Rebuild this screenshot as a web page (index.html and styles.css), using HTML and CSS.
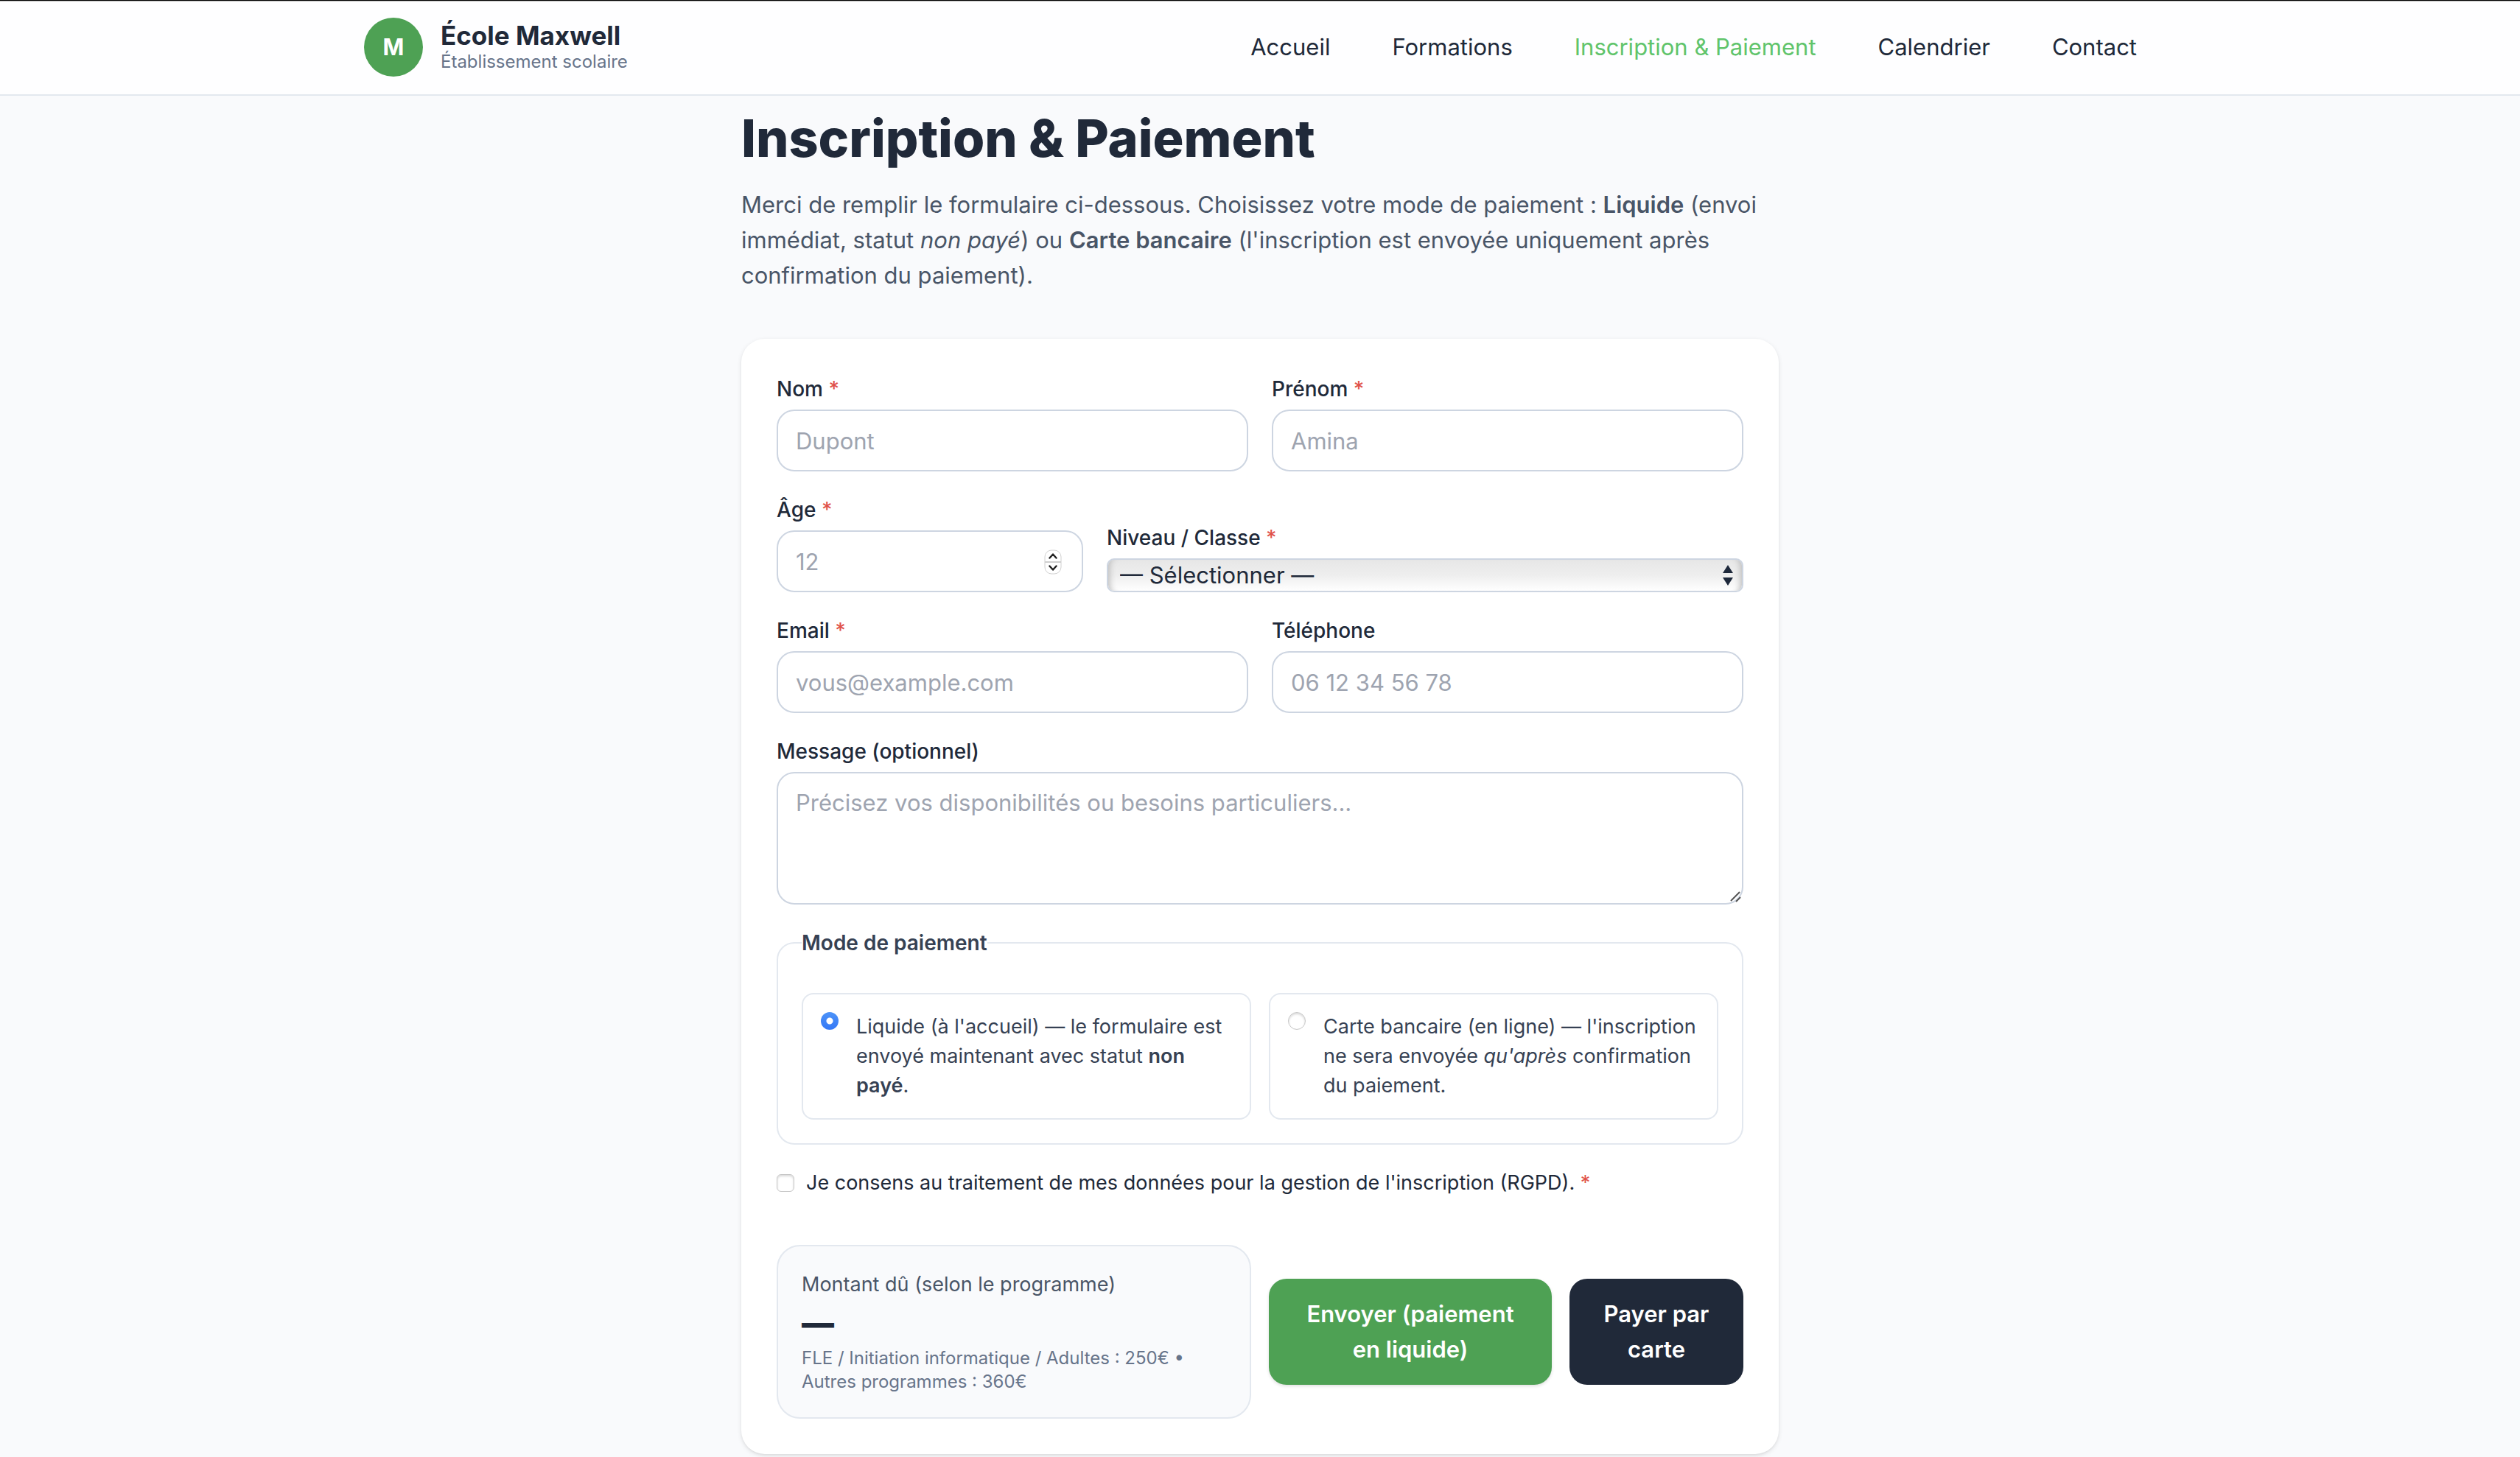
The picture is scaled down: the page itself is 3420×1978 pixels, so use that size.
FILE: index.html
```html
<!DOCTYPE html>
<html lang="fr">
<head>
  <meta charset="utf-8">
  <meta name="viewport" content="width=device-width, initial-scale=1">
  <title>Inscription &amp; Paiement – École Maxwell</title>
  <link rel="stylesheet" href="styles.css">
</head>
<body>
  <header class="site-header">
    <div class="header-inner">
      <a class="brand" href="#">
        <span class="brand-logo">M</span>
        <span class="brand-text">
          <span class="brand-name">École Maxwell</span>
          <span class="brand-tagline">Établissement scolaire</span>
        </span>
      </a>
      <nav class="site-nav">
        <a href="#">Accueil</a>
        <a href="#">Formations</a>
        <a href="#" class="active" aria-current="page">Inscription &amp; Paiement</a>
        <a href="#">Calendrier</a>
        <a href="#">Contact</a>
      </nav>
    </div>
  </header>

  <main class="page">
    <h1>Inscription &amp; Paiement</h1>
    <p class="intro">Merci de remplir le formulaire ci-dessous. Choisissez votre mode de paiement : <strong>Liquide</strong> (envoi immédiat, statut <em>non payé</em>) ou <strong>Carte bancaire</strong> (l'inscription est envoyée uniquement après confirmation du paiement).</p>

    <form class="card">
      <div class="row row-2">
        <div class="field">
          <label for="nom">Nom <span class="req">*</span></label>
          <input class="control" id="nom" type="text" placeholder="Dupont">
        </div>
        <div class="field">
          <label for="prenom">Prénom <span class="req">*</span></label>
          <input class="control" id="prenom" type="text" placeholder="Amina">
        </div>
      </div>

      <div class="row row-3">
        <div class="field">
          <label for="age">Âge <span class="req">*</span></label>
          <div class="control-wrap">
            <input class="control" id="age" type="number" placeholder="12">
            <svg class="stepper" viewBox="0 0 24 34" aria-hidden="true">
              <rect x="1" y="1" width="22" height="32" rx="9" fill="#fff" stroke="#d0d0d0" stroke-width="1"/>
              <path d="M1 17h22" stroke="#cfcfcf" stroke-width="2"/>
              <path d="M7.500 11.500l4.500-5 4.500 5M7.500 22.500l4.500 5 4.500-5" fill="none" stroke="#222" stroke-width="2.400" stroke-linecap="round" stroke-linejoin="round"/>
            </svg>
          </div>
        </div>
        <div class="field span-2">
          <label for="niveau">Niveau / Classe <span class="req">*</span></label>
          <div class="control-wrap">
            <select class="select" id="niveau"><option>— Sélectionner —</option></select>
            <svg class="arrows" viewBox="0 0 14 28" aria-hidden="true">
              <path d="M7 0l7 11H0zM7 28L0 17h14z" fill="#1e293b"/>
            </svg>
          </div>
        </div>
      </div>

      <div class="row row-2">
        <div class="field">
          <label for="email">Email <span class="req">*</span></label>
          <input class="control" id="email" type="email" placeholder="vous@example.com">
        </div>
        <div class="field">
          <label for="tel">Téléphone</label>
          <input class="control" id="tel" type="tel" placeholder="06 12 34 56 78">
        </div>
      </div>

      <div class="field">
        <label for="message">Message (optionnel)</label>
        <div class="control-wrap">
          <textarea class="control" id="message" rows="3" placeholder="Précisez vos disponibilités ou besoins particuliers..."></textarea>
          <svg class="grip" viewBox="0 0 16 16" aria-hidden="true">
            <path d="M1 13L13 1M8 14l6-6" fill="none" stroke="#555" stroke-width="2"/>
          </svg>
        </div>
      </div>

      <fieldset class="payment">
        <legend>Mode de paiement</legend>
        <div class="options">
          <label class="option">
            <input class="radio" type="radio" name="paiement" checked>
            <span>Liquide (à l'accueil) — le formulaire est envoyé maintenant avec statut <strong>non payé</strong>.</span>
          </label>
          <label class="option">
            <input class="radio" type="radio" name="paiement">
            <span>Carte bancaire (en ligne) — l'inscription ne sera envoyée <em>qu'après</em> confirmation du paiement.</span>
          </label>
        </div>
      </fieldset>

      <label class="consent">
        <input class="checkbox" type="checkbox">
        <span>Je consens au traitement de mes données pour la gestion de l'inscription (RGPD). <span class="req">*</span></span>
      </label>

      <div class="summary">
        <div class="amount">
          <div class="amount-label">Montant dû (selon le programme)</div>
          <div class="amount-value">—</div>
          <div class="amount-note">FLE / Initiation informatique / Adultes : 250€ • Autres programmes : 360€</div>
        </div>
        <div class="actions">
          <button class="btn btn-cash" type="submit">Envoyer (paiement en liquide)</button>
          <button class="btn btn-card" type="button">Payer par carte</button>
        </div>
      </div>
    </form>
  </main>
</body>
</html>
```
FILE: styles.css
```css
* {
  box-sizing: border-box;
}

body {
  margin: 0;
  min-height: 100vh;
  background: #f9fafc;
  color: #202939;
  font-family: Inter, "Liberation Sans", sans-serif;
  font-size: 31px;
  line-height: 48px;
}

a {
  color: inherit;
  text-decoration: none;
}

strong {
  font-weight: 600;
}

/* Header */
.site-header {
  background: #fefeff;
  border-bottom: 2px solid #e3e8ef;
  box-shadow: inset 0 1px #000, inset 0 2px #b4b4b4;
}

.header-inner {
  display: flex;
  align-items: center;
  justify-content: space-between;
  max-width: 2560px;
  height: 128px;
  margin: 0 auto;
  padding: 0 64px;
}

.brand {
  display: flex;
  align-items: center;
  gap: 24px;
}

.brand-logo {
  display: flex;
  align-items: center;
  justify-content: center;
  width: 80px;
  height: 80px;
  border-radius: 50%;
  background: #4ea154;
  color: #fff;
  font-weight: 700;
}

.brand-text {
  display: flex;
  flex-direction: column;
}

.brand-name {
  font-size: 35px;
  line-height: 40px;
  font-weight: 700;
}

.brand-tagline {
  color: #67748a;
  font-size: 24px;
  line-height: 32px;
}

.site-nav {
  display: flex;
  gap: 84px;
  padding-right: 26px;
}

.site-nav .active {
  color: #60c46b;
}

/* Page */
.page {
  max-width: 1536px;
  margin: 0 auto;
  padding: 18px 64px 64px;
}

h1 {
  margin: 0;
  font-size: 70px;
  line-height: 80px;
  font-weight: 800;
}

.intro {
  margin: 26px 0 0;
  color: #495567;
}

.card {
  display: flex;
  flex-direction: column;
  gap: 32px;
  margin-top: 62px;
  padding: 48px;
  border-radius: 32px;
  background: #fff;
  box-shadow: 0 2px 6px rgba(0, 0, 0, 0.1), 0 2px 4px -2px rgba(0, 0, 0, 0.1);
}

/* Fields */
.row {
  display: grid;
  gap: 32px;
  align-items: end;
}

.row-2 {
  grid-template-columns: repeat(2, 1fr);
}

.row-3 {
  grid-template-columns: repeat(3, 1fr);
}

.span-2 {
  grid-column: span 2;
}

.field {
  display: flex;
  flex-direction: column;
  gap: 8px;
}

.field label {
  font-size: 28px;
  line-height: 40px;
  font-weight: 500;
}

.req {
  color: #e0524a;
}

.control-wrap {
  position: relative;
  display: flex;
}

.control {
  display: block;
  width: 100%;
  margin: 0;
  padding: 16px 24px;
  border: 2px solid #cdd5e1;
  border-radius: 24px;
  background: #fff;
  color: inherit;
  font: inherit;
  resize: none;
  appearance: none;
}

input.control {
  height: 84px;
}

.control::placeholder {
  color: #9ea4b0;
  opacity: 1;
}

input[type="number"] {
  appearance: textfield;
}

.stepper {
  position: absolute;
  top: 26px;
  right: 29px;
  width: 24px;
  height: 34px;
}

.select {
  width: 100%;
  height: 46px;
  margin: 0;
  padding: 0 16px;
  border: 2px solid #cdd5e1;
  border-radius: 10px;
  background: linear-gradient(#e7e7e7, #eee 50%, #fff);
  box-shadow: inset 10px 0 8px -8px #bbb, inset -10px 0 8px -8px #bbb;
  color: inherit;
  font: inherit;
  line-height: 42px;
  appearance: none;
}

.arrows {
  position: absolute;
  top: 9px;
  right: 14px;
  width: 14px;
  height: 28px;
}

.grip {
  position: absolute;
  right: 2px;
  bottom: 2px;
  width: 16px;
  height: 16px;
}

/* Payment mode */
.payment {
  min-width: 0;
  margin: 0;
  padding: 32px;
  border: 2px solid #e3e8ef;
  border-radius: 24px;
}

.payment legend {
  padding: 0;
  color: #364153;
  font-size: 28px;
  line-height: 40px;
  font-weight: 600;
}

.options {
  display: grid;
  grid-template-columns: repeat(2, 1fr);
  gap: 24px;
  margin-top: 16px;
}

.option {
  display: flex;
  align-items: flex-start;
  gap: 24px;
  padding: 24px;
  border: 2px solid #e3e8ef;
  border-radius: 16px;
  color: #364153;
  font-size: 27px;
  line-height: 40px;
}

.radio,
.checkbox {
  flex: none;
  width: 24px;
  height: 24px;
  margin: 0;
  border: 1px solid #c6c6c6;
  background: #fff;
  box-shadow: inset 0 2px 3px rgba(0, 0, 0, 0.15);
  appearance: none;
}

.radio {
  border-radius: 50%;
}

.radio:checked {
  border: 0;
  background: radial-gradient(circle, #fff 4px, transparent 5px), linear-gradient(#4d93f8, #3478f6);
  box-shadow: none;
}

.checkbox {
  border-radius: 6px;
}

.consent {
  display: flex;
  align-items: center;
  gap: 16px;
  font-size: 27px;
  line-height: 40px;
}

/* Amount and actions */
.summary {
  display: grid;
  grid-template-columns: repeat(2, 1fr);
  align-items: center;
  gap: 24px;
  margin-top: 32px;
}

.amount {
  padding: 32px;
  border: 2px solid #e3e8ef;
  border-radius: 32px;
  background: #f9fafc;
}

.amount-label {
  color: #495567;
  font-size: 27px;
  line-height: 40px;
}

.amount-value {
  font-size: 44px;
  line-height: 64px;
  font-weight: 900;
}

.amount-note {
  color: #67748a;
  font-size: 24px;
  line-height: 32px;
}

.actions {
  display: grid;
  grid-template-columns: 384fr 236fr;
  gap: 24px;
}

.btn {
  margin: 0;
  padding: 24px 40px;
  border: 0;
  border-radius: 24px;
  color: #fff;
  font: inherit;
  font-weight: 600;
}

.btn-cash {
  background: #4ea154;
  box-shadow: 0 2px 4px rgba(0, 0, 0, 0.12);
}

.btn-card {
  background: #202939;
}
```
